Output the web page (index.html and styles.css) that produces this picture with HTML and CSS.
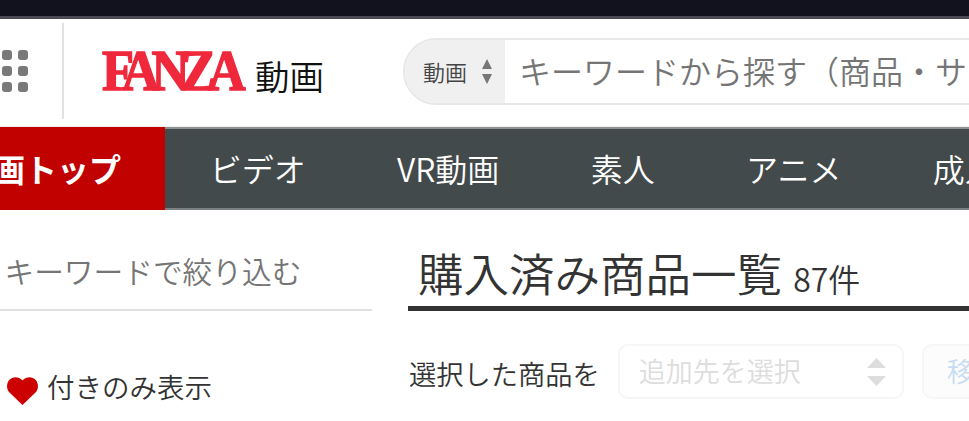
FILE: index.html
```html
<!DOCTYPE html>
<html lang="ja">

<head>
    <meta charset="UTF-8">
    <meta name="viewport" content="width=device-width, initial-scale=1.0">
    <title>購入済み商品一覧</title>
    <link rel="stylesheet" href="styles.css">
</head>

<body>
    <div class="topbar"></div>

    <header class="head">
        <div class="menu">
            <i></i><i></i><i></i>
            <i></i><i></i><i></i>
            <i></i><i></i><i></i>
        </div>
        <div class="brand">
            <span class="logo">FANZA</span>
            <span class="brand-name">動画</span>
        </div>
        <form class="search">
            <div class="search-type">
                <span>動画</span>
                <span class="updown">
                    <svg width="10" height="25" viewBox="0 0 10 25"><path d="M5 0 10 10H0ZM0 15H10L5 25Z" fill="#777"/></svg>
                </span>
            </div>
            <div class="search-text">キーワードから探す（商品・サ</div>
        </form>
    </header>

    <nav class="nav">
        <div class="nav-top"><a>動画トップ</a></div>
        <a>ビデオ</a>
        <a>VR動画</a>
        <a>素人</a>
        <a>アニメ</a>
        <a>成人映画</a>
    </nav>

    <div class="content">
        <aside class="side">
            <div class="side-search">キーワードで絞り込む</div>
            <div class="fav">
                <svg width="31" height="28" viewBox="0 0 31 28"><path d="M15.500 28 2.500 15.500C-1 12-.6 6 2.500 2.800 6-.8 11.500-.7 15.500 3.500 19.500-.7 25-.8 28.500 2.800 31.600 6 32 12 28.500 15.500Z" fill="#cc0000"/></svg>
                <span>付きのみ表示</span>
            </div>
        </aside>
        <main class="list">
            <h1 class="title">購入済み商品一覧 <small>87件</small></h1>
            <div class="bulk">
                <span class="bulk-label">選択した商品を</span>
                <div class="bulk-select">
                    <span>追加先を選択</span>
                    <svg width="19" height="28" viewBox="0 0 19 28"><path d="M9.500 0 19 10H0ZM0 18H19L9.500 28Z" fill="#ddd"/></svg>
                </div>
                <div class="bulk-btn">移動する</div>
            </div>
        </main>
    </div>
</body>

</html>
```

FILE: styles.css
```css
html,
body {
    height: 100%;
}

body {
    margin: 0;
    overflow: hidden;
    background: #fff;
    color: #333;
    font-family: "Noto Sans CJK JP", "Noto Sans", sans-serif;
    font-weight: 350;
}

.topbar {
    height: 16px;
    background: #12121e;
    border-bottom: 3px solid #4b4b55;
}

/* header */
.head {
    display: flex;
    align-items: center;
    height: 108px;
    padding-bottom: 3px;
    border-bottom: 1px solid #eee;
    box-sizing: border-box;
}

.menu {
    display: grid;
    grid-template-columns: repeat(3, 10px);
    grid-auto-rows: 10px;
    gap: 6px;
    flex: none;
    margin-left: -14px;
    width: 42px;
}

.menu i {
    background: #7a7a7a;
    border-radius: 3px;
}

.brand {
    display: flex;
    align-items: center;
    flex: none;
    width: 341px;
    height: 96px;
    margin-left: 34px;
    border-left: 2px solid #e2e2e2;
    box-sizing: border-box;
}

.logo {
    margin-left: 38px;
    width: 143px;
    font-family: "Liberation Serif", serif;
    font-weight: bold;
    font-size: 57px;
    line-height: 40px;
    letter-spacing: -9px;
    color: #f0283c;
    -webkit-text-stroke: 1.500px #f0283c;
    transform: scaleX(.92);
    transform-origin: left center;
}

.brand-name {
    margin-left: 10px;
    color: #111;
    font-size: 34.500px;
    line-height: 40px;
    padding-top: 8px;
}

.search {
    display: flex;
    flex: none;
    width: 700px;
    height: 67px;
    border: 2px solid #e8e8e8;
    border-radius: 34px 0 0 34px;
    box-sizing: border-box;
    overflow: hidden;
}

.search-type {
    display: flex;
    flex: none;
    align-items: center;
    gap: 15px;
    width: 100px;
    padding-left: 18px;
    background: #f0f0f0;
    box-sizing: border-box;
    font-size: 22px;
    color: #444;
    white-space: nowrap;
}

.updown {
    display: flex;
}

.search-text {
    padding-left: 14px;
    font-size: 32px;
    line-height: 61px;
    color: #757575;
    white-space: nowrap;
}

/* nav */
.nav {
    display: flex;
    height: 79px;
    background: #434a4b;
    border-top: 2px solid #8b9091;
    border-bottom: 2px solid #7d8384;
}

.nav a {
    flex: none;
    padding: 0 45.700px;
    font-size: 32px;
    line-height: 79px;
    color: #fff;
    white-space: nowrap;
}

.nav .nav-top {
    display: flex;
    justify-content: flex-end;
    flex: none;
    width: 165px;
    height: 83px;
    margin: -2px -1px -2px 0;
    background: #c10000;
    overflow: hidden;
}

.nav .nav-top a {
    padding: 0 44px 0 0;
    font-weight: bold;
    line-height: 83px;
}

/* content */
.content {
    display: flex;
    gap: 36px;
}

.side {
    flex: none;
    width: 372px;
}

.side-search {
    height: 101px;
    padding: 39px 0 0 4.500px;
    box-sizing: border-box;
    border-bottom: 2px solid #e0e0e0;
    font-size: 29.700px;
    line-height: 44px;
    color: #757575;
}

.fav {
    display: flex;
    align-items: center;
    gap: 9px;
    margin-top: 55px;
    padding-left: 7px;
    font-size: 27.500px;
    line-height: 40px;
}

.fav span {
    margin-bottom: 10px;
}

.list {
    flex: 1;
    min-width: 0;
}

.title {
    height: 101px;
    margin: 0;
    padding: 30px 0 0 10px;
    box-sizing: border-box;
    border-bottom: 5px solid #333;
    font-size: 45.500px;
    font-weight: 350;
    line-height: 64px;
    white-space: nowrap;
}

.title small {
    margin-left: 1px;
    font-size: 32px;
}

.bulk {
    display: flex;
    align-items: center;
    margin-top: 33px;
    padding-left: 1px;
    font-size: 27px;
    white-space: nowrap;
}

.bulk-label {
    margin-top: 2px;
    font-size: 27.250px;
}

.bulk-select {
    display: flex;
    align-items: center;
    justify-content: space-between;
    flex: none;
    width: 286px;
    height: 55px;
    margin-left: 18px;
    padding: 0 16px 0 19px;
    box-sizing: border-box;
    border: 2px solid #f6f6f6;
    border-radius: 10px;
    color: #ddd;
}

.bulk-select span {
    margin-bottom: 2px;
}

.bulk-btn {
    flex: none;
    height: 55px;
    margin-left: 18px;
    padding: 0 23px;
    box-sizing: border-box;
    border: 2px solid #f6f6f6;
    border-radius: 10px;
    background: #fcfcfc;
    color: #c8dcf2;
    line-height: 50px;
}
```
